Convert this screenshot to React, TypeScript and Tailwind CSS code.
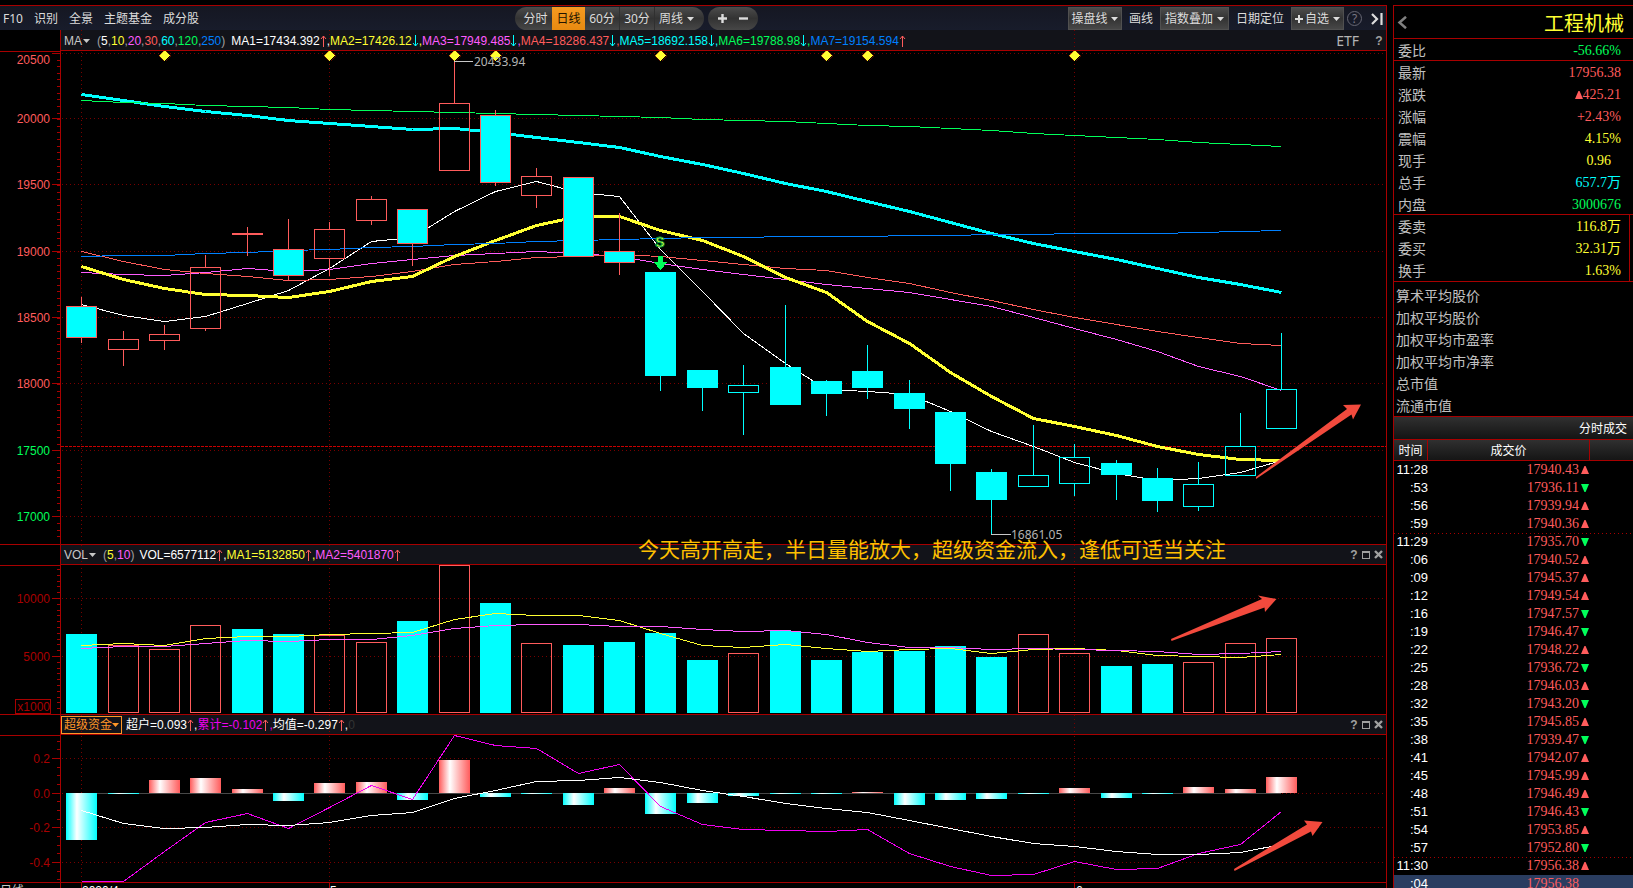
import type { ReactNode } from "react";

type Kind = "up" | "downRed" | "down" | "upCyan";
type Candle = [number, number, number, number, number, Kind];

const RED = "#ff5c5c";
const CYAN = "#00ffff";
const YELLOW = "#ffff32";
const PINK = "#ff5cff";
const GREEN = "#00ff5a";
const BLUE = "#0080ff";
const GRID = "#780000";

// x, high, body top, body bottom, low
const candles: Candle[] = [
  [81, 297, 306, 337, 342, "downRed"],
  [123, 331, 339, 349, 365, "up"],
  [164, 325, 334, 340, 349, "up"],
  [205, 255, 267, 328, 330, "up"],
  [247, 227, 233, 234, 255, "up"],
  [288, 219, 249, 275, 280, "downRed"],
  [329, 222, 229, 258, 275, "up"],
  [371, 196, 199, 220, 224, "up"],
  [412, 209, 209, 243, 265, "downRed"],
  [454, 61, 103, 170, 170, "up"],
  [495, 110, 115, 182, 185, "downRed"],
  [536, 168, 176, 195, 207, "up"],
  [578, 177, 177, 256, 256, "downRed"],
  [619, 213, 251, 262, 274, "downRed"],
  [660, 272, 272, 375, 390, "down"],
  [702, 370, 370, 387, 410, "down"],
  [743, 365, 385, 392, 434, "upCyan"],
  [785, 305, 367, 404, 404, "down"],
  [826, 380, 381, 393, 415, "down"],
  [867, 345, 371, 387, 398, "down"],
  [909, 380, 393, 408, 428, "down"],
  [950, 412, 412, 463, 490, "down"],
  [991, 469, 472, 499, 534, "down"],
  [1033, 425, 475, 486, 486, "upCyan"],
  [1074, 444, 457, 483, 495, "upCyan"],
  [1116, 460, 463, 474, 499, "down"],
  [1157, 468, 478, 500, 511, "down"],
  [1198, 462, 484, 506, 510, "upCyan"],
  [1240, 413, 446, 475, 475, "upCyan"],
  [1281, 333, 389, 428, 428, "upCyan"],
];

const ma5 = [304, 315, 321, 316, 303, 290, 268, 241, 237, 211, 191, 181, 192, 196, 249, 291, 333, 363, 389, 391, 394, 411, 431, 446, 462, 473, 480, 478, 472, 460];
const ma10 = [266, 279, 288, 294, 295, 297, 291, 281, 276, 256, 240, 225, 216, 216, 230, 240, 256, 277, 292, 321, 343, 372, 396, 418, 426, 435, 446, 454, 459, 460];
const ma20 = [272, 274, 275, 272, 268, 271, 269, 263, 259, 255, 253, 251, 253, 256, 263, 269, 274, 279, 284, 288, 292, 299, 306, 317, 328, 339, 351, 366, 376, 390];
const ma30 = [251, 261, 269, 273, 276, 280, 279, 276, 271, 264, 261, 257, 256, 254, 256, 260, 264, 268, 270, 277, 283, 292, 300, 309, 317, 324, 331, 337, 343, 345];
const ma60 = [94, 100, 106, 111, 115, 120, 123, 126, 129, 128, 132, 137, 142, 147, 156, 164, 173, 183, 191, 201, 211, 222, 233, 243, 251, 259, 268, 277, 284, 292];
const ma120 = [100, 102, 103, 105, 106, 107, 109, 110, 111, 112, 113, 114, 115, 116, 117, 119, 120, 121, 123, 125, 126, 128, 130, 133, 135, 137, 139, 142, 144, 146];
const ma250 = [256, 255, 255, 253, 252, 250, 249, 247, 246, 244, 243, 241, 240, 239, 238, 237, 237, 236, 236, 236, 235, 235, 234, 234, 233, 233, 233, 232, 231, 230];

const volTops = [634, 645, 649, 625, 629, 634, 635, 642, 621, 565, 603, 643, 645, 642, 633, 660, 653, 631, 660, 652, 651, 646, 657, 634, 653, 666, 664, 662, 643, 638];
const volHollow = [1, 2, 3, 6, 7, 9, 11, 16, 23, 24, 27, 28, 29];
const volMa5 = [645, 643, 645, 638, 636, 636, 634, 633, 632, 619, 613, 615, 615, 620, 633, 645, 647, 644, 648, 651, 649, 648, 653, 649, 648, 650, 655, 656, 657, 654];
const volMa10 = [648, 646, 646, 643, 640, 641, 639, 639, 635, 628, 625, 624, 624, 626, 626, 629, 631, 630, 634, 642, 647, 647, 649, 648, 649, 650, 651, 654, 653, 651];

const fundBars = [-47, -1, 13, 15, 4, -8, 10, 11, -7, 33, -4, -1, -12, 5, -21, -10, -3, -1, -1, 1, -12, -7, -6, -1, 5, -5, -1, 6, 4, 16];
const fundSum = [881, 881, 851, 822, 813, 828, 807, 785, 799, 735, 745, 748, 773, 764, 806, 824, 829, 830, 831, 829, 853, 866, 875, 874, 861, 869, 868, 853, 844, 811];
const fundAvg = [810, 823, 828, 827, 824, 825, 822, 815, 812, 798, 790, 781, 780, 777, 782, 790, 796, 803, 808, 812, 820, 828, 836, 843, 846, 851, 854, 854, 852, 844];

const months = [81, 329, 1074];
const diamonds = [164, 329, 454, 495, 660, 826, 867, 1074];

const quotes = [
  { label: "最新", value: "17956.38", color: "text-[#ff5c5c]" },
  { label: "涨跌", value: "425.21", color: "text-[#ff5c5c]", up: true },
  { label: "涨幅", value: "+2.43%", color: "text-[#ff5c5c]" },
  { label: "震幅", value: "4.15%", color: "text-[#ffff32]" },
  { label: "现手", value: "0.96", color: "text-[#ffff32] pr-[10px]" },
  { label: "总手", value: "657.7万", color: "text-[#00ffff]" },
  { label: "内盘", value: "3000676", color: "text-[#00ff5a]" },
];

const orders = [
  { label: "委卖", value: "116.8万", color: "text-[#ffff32]" },
  { label: "委买", value: "32.31万", color: "text-[#ffff32]" },
  { label: "换手", value: "1.63%", color: "text-[#ffff32]" },
];

const averages = ["算术平均股价", "加权平均股价", "加权平均市盈率", "加权平均市净率", "总市值", "流通市值"];

const trades: [string, string, number][] = [
  ["11:28", "17940.43", 1],
  [":53", "17936.11", -1],
  [":56", "17939.94", 1],
  [":59", "17940.36", 1],
  ["11:29", "17935.70", -1],
  [":06", "17940.52", 1],
  [":09", "17945.37", 1],
  [":12", "17949.54", 1],
  [":16", "17947.57", -1],
  [":19", "17946.47", -1],
  [":22", "17948.22", 1],
  [":25", "17936.72", -1],
  [":28", "17946.03", 1],
  [":32", "17943.20", -1],
  [":35", "17945.85", 1],
  [":38", "17939.47", -1],
  [":41", "17942.07", 1],
  [":45", "17945.99", 1],
  [":48", "17946.49", 1],
  [":51", "17946.43", -1],
  [":54", "17953.85", 1],
  [":57", "17952.80", -1],
  ["11:30", "17956.38", 1],
  [":04", "17956.38", 0],
];

const Caret = () => (
  <svg width="7" height="4" viewBox="0 0 7 4" className="shrink-0 fill-current">
    <path d="M0 0h7L3.5 4z" />
  </svg>
);

const Arrow = ({ down = false }: { down?: boolean }) => (
  <svg width="7" height="12" viewBox="0 0 7 12" className="shrink-0" fill="none" stroke={down ? CYAN : RED}>
    {down ? <path d="M3.5 0v11M1 8l2.5 3L6 8" /> : <path d="M3.5 12V1M1 4l2.5-3L6 4" />}
  </svg>
);

const Triangle = ({ dir }: { dir: number }) => (
  <svg width="8" height="8" viewBox="0 0 7 7" className="shrink-0" fill={dir > 0 ? RED : GREEN}>
    {dir > 0 && <path d="M0 7L3 0h1l3 7z" />}
    {dir < 0 && <path d="M0 0l3 7h1l3-7z" />}
  </svg>
);

function Line({ ys, color, width = 1 }: { ys: number[]; color: string; width?: number }) {
  const points = ys.map((y, i) => `${candles[i][0] + 0.5},${y + 0.5}`).join(" ");
  return <polyline points={points} fill="none" stroke={color} strokeWidth={width} />;
}

function MonthLines() {
  return (
    <>
      {months.map((x) => (
        <line key={x} x1={x + 0.5} x2={x + 0.5} y1="0" y2="900" stroke={GRID} strokeDasharray="1 3" />
      ))}
    </>
  );
}

// chart body, drawn in screen coordinates shifted by the panel's own origin
function Plot({ top, rows, className, children }: { top: number; rows: number[]; className: string; children: ReactNode }) {
  return (
    <svg className={className} shapeRendering="crispEdges">
      <g transform={`translate(-61 ${-top})`}>
        <MonthLines />
        {rows.map((y) => (
          <line key={y} x1="62" x2="4000" y1={y + 0.5} y2={y + 0.5} stroke={GRID} strokeDasharray="1 3" />
        ))}
        {children}
      </g>
    </svg>
  );
}

interface AxisProps {
  origin: number;
  top: number;
  bottom: number;
  rows: [number, string, string][];
  step: number;
  children?: ReactNode;
}

function Axis({ origin, top, bottom, rows, step, children }: AxisProps) {
  const ticks: number[] = [];
  for (let y = rows[0][0]; y > top + 2; y -= step) ticks.push(Math.round(y));
  for (let y = rows[0][0]; y < bottom - 2; y += step) ticks.push(Math.round(y));
  return (
    <svg className="w-[60px] shrink-0 font-['Liberation_Sans',sans-serif] text-xs" shapeRendering="crispEdges">
      <g transform={`translate(0 ${-origin})`}>
        <path d={`M0 ${top + 0.5}H60`} stroke="#a80000" />
        {ticks.map((y, i) => (
          <path key={i} d={`M57 ${y + 0.5}H60`} stroke="#a80000" />
        ))}
        {rows.map(([y, label, color]) => (
          <g key={label}>
            <path d={`M52 ${y + 0.5}H60`} stroke="#a80000" />
            <text x="50" y={Math.max(y + 5, top + 13)} textAnchor="end" fill={color}>
              {label}
            </text>
          </g>
        ))}
        {children}
      </g>
    </svg>
  );
}

function LegendBar({ className, tools = true, children }: { className: string; tools?: boolean; children: ReactNode }) {
  return (
    <div className={`relative flex items-center border-b border-[#a80000] bg-[#121319] font-['Liberation_Sans','Noto_Sans_CJK_SC',sans-serif] text-xs leading-4 whitespace-nowrap ${className}`}>
      <svg className="absolute inset-0 h-full w-full">
        <g transform="translate(-61 0)">
          <MonthLines />
        </g>
      </svg>
      <div className="relative flex items-center">{children}</div>
      <div className="relative ml-auto flex items-center gap-1 pr-[3px] text-[#a0a0a0]">
        {!tools && <span className="pr-3 font-['Noto_Sans',sans-serif] text-sm leading-4 text-[#b4b4b4]">ETF</span>}
        <button aria-label="帮助" className="w-2 font-bold">
          ?
        </button>
        {tools && (
          <>
            <button aria-label="最大化">
              <svg width="8" height="8" viewBox="0 0 8 8" fill="none" stroke="currentColor" shapeRendering="crispEdges">
                <path d="M.5 0v8M7.5 0v8M0 7.5h8M0 .5h8M0 1.5h8" />
              </svg>
            </button>
            <button aria-label="关闭">
              <svg width="9" height="9" viewBox="0 0 9 9" fill="none" stroke="currentColor" strokeWidth="2.4">
                <path d="M1 1l7 7M8 1L1 8" />
              </svg>
            </button>
          </>
        )}
      </div>
    </div>
  );
}

function Stat({ text, color, down, last }: { text: string; color: string; down?: boolean; last?: boolean }) {
  return (
    <span className={`flex items-center ${color}`}>
      {text}
      <Arrow down={down} />
      {!last && ","}
    </span>
  );
}

function Toolbar() {
  const grey = "bg-linear-to-b from-[#4c4c4c] via-[#333333] to-[#474747]";
  return (
    <div className="flex h-6 items-center bg-linear-to-b from-[#151722] to-[#181c2b] pt-px font-['Noto_Sans','Noto_Sans_CJK_SC',sans-serif] text-xs leading-4 whitespace-nowrap text-[#dcdcdc]">
      <nav className="flex w-[515px] shrink-0 items-center gap-[11px] pt-px pl-[3px]">
        {["F10", "识别", "全景", "主题基金", "成分股"].map((t) => (
          <a key={t} href="#">
            {t}
          </a>
        ))}
      </nav>
      <div className={`flex h-[23px] shrink-0 overflow-hidden rounded-full ${grey}`}>
        <button className="w-[37px] pl-1">分时</button>
        <button className="w-[33px] bg-linear-to-b from-[#f59a20] to-[#e88a10] text-[#221400]">日线</button>
        <button className="w-[35px] border-r border-[#303030]">60分</button>
        <button className="w-[35px] border-r border-[#303030]">30分</button>
        <button className="flex w-[49px] items-center gap-1 pl-1">
          周线 <Caret />
        </button>
      </div>
      <div className={`ml-1 flex h-[23px] w-[50px] shrink-0 items-center justify-center gap-3 rounded-full ${grey}`}>
        <button aria-label="放大">
          <svg width="9" height="9" stroke="currentColor" strokeWidth="2.4">
            <path d="M0 4.5h9M4.5 0v9" />
          </svg>
        </button>
        <button aria-label="缩小">
          <svg width="9" height="9" stroke="currentColor" strokeWidth="2.4">
            <path d="M0 4.5h9" />
          </svg>
        </button>
      </div>
      <div className="ml-auto flex shrink-0 items-center gap-[7px] pr-[3px]">
        <button className={`flex h-[23px] w-[54px] items-center justify-center gap-1 border border-[#505050] ${grey}`}>
          操盘线 <Caret />
        </button>
        <button>画线</button>
        <button className={`flex h-[23px] w-[69px] items-center justify-center gap-1 border border-[#505050] ${grey}`}>
          指数叠加 <Caret />
        </button>
        <button>日期定位</button>
        <button className={`flex h-[23px] w-[53px] items-center justify-center gap-1 border border-[#505050] ${grey}`}>
          <svg width="8" height="8" className="-mr-0.5" stroke="currentColor" strokeWidth="2">
            <path d="M0 4h8M4 0v8" />
          </svg>
          自选 <Caret />
        </button>
        <button aria-label="帮助" className="-ml-1 flex size-[15px] items-center justify-center rounded-full border border-[#666672] text-[#777783]">
          ?
        </button>
        <button aria-label="收起" className="pl-0.5">
          <svg width="12" height="12" fill="none" stroke="currentColor" strokeWidth="2.2">
            <path d="M1 1l5 5-5 5M10.500 0v12" />
          </svg>
        </button>
      </div>
    </div>
  );
}

function PriceChart() {
  const rows: [number, string, string][] = [
    [53, "20500", RED],
    [118, "20000", RED],
    [184, "19500", RED],
    [251, "19000", RED],
    [317, "18500", RED],
    [383, "18000", RED],
    [450, "17500", GREEN],
    [516, "17000", GREEN],
  ];
  return (
    <section className="flex border-b border-[#a80000]">
      <Axis origin={30} top={51} bottom={544} step={6.62} rows={rows} />
      <div className="min-w-0 flex-1 border-l border-[#a80000]">
        <LegendBar className="h-[21px] pt-0.5 pl-[3px]" tools={false}>
          <button className="flex items-center gap-px text-[#c8c8c8]">
            MA <Caret />
          </button>
          <span className="pr-[6px] pl-[7px] text-[#a0a0a0]">
            (<b className="font-normal text-white">5</b>,<b className="font-normal text-[#ffff32]">10</b>,
            <b className="font-normal text-[#ff5cff]">20</b>,<b className="font-normal text-[#ff5c5c]">30</b>,
            <b className="font-normal text-[#00ffff]">60</b>,<b className="font-normal text-[#00ff5a]">120</b>,
            <b className="font-normal text-[#0080ff]">250</b>)
          </span>
          <Stat text="MA1=17434.392" color="text-white" />
          <Stat text="MA2=17426.12" color="text-[#ffff32]" down />
          <Stat text="MA3=17949.485" color="text-[#ff5cff]" down />
          <Stat text="MA4=18286.437" color="text-[#ff5c5c]" down />
          <Stat text="MA5=18692.158" color="text-[#00ffff]" down />
          <Stat text="MA6=19788.98" color="text-[#00ff5a]" down />
          <Stat text="MA7=19154.594" color="text-[#0080ff]" last />
        </LegendBar>
        <Plot top={51} rows={rows.map((r) => r[0])} className="block h-[493px] w-full">
          <line x1="61" x2="4000" y1="446.500" y2="446.500" stroke="#c80000" strokeDasharray="3 1" />
          <Line ys={ma5} color="#ffffff" />
          <Line ys={ma20} color={PINK} />
          <Line ys={ma30} color={RED} />
          <Line ys={ma10} color={YELLOW} width={3} />
          <Line ys={ma60} color={CYAN} width={3} />
          <Line ys={ma120} color={GREEN} />
          <Line ys={ma250} color={BLUE} />
          {candles.map(([x, high, top, bottom, low, kind]) => {
            const edge = kind === "up" || kind === "downRed" ? RED : CYAN;
            const filled = kind === "down" || kind === "downRed";
            return (
              <g key={x} stroke={edge}>
                <path d={`M${x + 0.5} ${high}V${top}M${x + 0.5} ${bottom + 1}V${low + 1}`} />
                <rect x={x - 14.5} y={top + 0.5} width="30" height={bottom - top} fill={filled ? CYAN : "none"} />
              </g>
            );
          })}
          {diamonds.map((x) => (
            <path key={x} d={`M${x - 5} 55.500l5.500-5.500 5.500 5.500-5.500 5.500z`} fill={YELLOW} stroke="#a02000" strokeWidth="0.5" />
          ))}
          <g className="font-['Noto_Sans',sans-serif] text-xs" fill="#b4b4b4">
            <path d="M454 61.500h19M991 534.500h20" stroke="#c8c8c8" />
            <text x="474" y="66">20433.94</text>
            <text x="1011" y="539">16861.05</text>
          </g>
          <text x="660" y="247" textAnchor="middle" className="font-['Liberation_Sans',sans-serif] text-sm font-bold" fill={YELLOW} stroke="#00a040" strokeWidth="1">
            S
          </text>
          <path d="M658 256h5v6h4l-6 8h-1l-6-8h4z" fill={GREEN} />
          <path d="M1256 477L1347 409l-4-4 18-.5-8 15-1.500-5L1256 479z" fill="#f24a3d" shapeRendering="auto" />
        </Plot>
      </div>
    </section>
  );
}

function VolumeChart() {
  return (
    <section className="flex border-b border-[#a80000]">
      <Axis
        origin={545}
        top={565}
        bottom={714}
        step={5.8}
        rows={[
          [598, "10000", "#a80000"],
          [656, "5000", "#a80000"],
        ]}
      >
        <rect x="15.500" y="699.500" width="35" height="14" fill="none" stroke="#a80000" />
        <text x="50" y="711" textAnchor="end" fill="#a80000">
          x1000
        </text>
      </Axis>
      <div className="relative min-w-0 flex-1 border-l border-[#a80000]">
        <LegendBar className="h-5 pl-[3px]">
          <button className="flex items-center gap-px text-[#c8c8c8]">
            VOL <Caret />
          </button>
          <span className="pr-[5px] pl-[7px] text-[#a0a0a0]">
            (<b className="font-normal text-[#ffff32]">5</b>,<b className="font-normal text-[#ff5cff]">10</b>)
          </span>
          <Stat text="VOL=6577112" color="text-white" />
          <Stat text="MA1=5132850" color="text-[#ffff32]" />
          <Stat text="MA2=5401870" color="text-[#ff5cff]" last />
        </LegendBar>
        <Plot top={565} rows={[598, 656]} className="block h-[149px] w-full">
          {volTops.map((y, i) => {
            const x = candles[i][0];
            return volHollow.includes(i) ? (
              <rect key={i} x={x - 14.5} y={y + 0.5} width="30" height={712 - y} fill="none" stroke={RED} />
            ) : (
              <rect key={i} x={x - 15} y={y} width="31" height={713 - y} fill={CYAN} />
            );
          })}
          <Line ys={volMa5} color={YELLOW} />
          <Line ys={volMa10} color={PINK} />
          <path d="M1171 639L1262 599l-4-3.500 18.500 3.500-11.500 13-.5-4.500L1171.500 641z" fill="#f24a3d" shapeRendering="auto" />
        </Plot>
        <p className="absolute -top-2 left-[577px] font-['Noto_Sans_CJK_SC',sans-serif] text-[21px] leading-[22px] whitespace-nowrap text-[#ffc000]">
          今天高开高走，半日量能放大，超级资金流入，逢低可适当关注
        </p>
      </div>
    </section>
  );
}

function FundChart() {
  return (
    <section className="flex border-b border-[#a80000]">
      <Axis
        origin={715}
        top={735}
        bottom={882}
        step={8.67}
        rows={[
          [758, "0.2", "#a80000"],
          [793, "0.0", "#a80000"],
          [827, "-0.2", "#a80000"],
          [862, "-0.4", "#a80000"],
        ]}
      />
      <div className="min-w-0 flex-1 border-l border-[#a80000]">
        <LegendBar className="h-5">
          <button className="mr-1 flex h-[18px] w-[61px] items-center border border-[#ff9628] pl-0.5 text-[#ff9628]">
            超级资金
            <Caret />
          </button>
          <Stat text="超户=0.093" color="text-white" />
          <Stat text="累计=-0.102" color="text-[#f000f0]" />
          <Stat text="均值=-0.297" color="text-white" />
          <span className="text-[#333333]">0</span>
        </LegendBar>
        <Plot top={735} rows={[758, 793, 827, 862]} className="block h-[147px] w-full">
          <defs>
            <linearGradient id="inflow">
              <stop offset="0" stopColor={RED} />
              <stop offset="0.35" stopColor="#ffffff" />
              <stop offset="1" stopColor={RED} />
            </linearGradient>
            <linearGradient id="outflow">
              <stop offset="0" stopColor={CYAN} />
              <stop offset="0.35" stopColor="#ffffff" />
              <stop offset="1" stopColor={CYAN} />
            </linearGradient>
          </defs>
          <line x1="81" x2="1281" y1="793.500" y2="793.500" stroke="#484848" />
          {fundBars.map((v, i) => (
            <rect key={i} x={candles[i][0] - 15} y={v > 0 ? 793 - v : 793} width="31" height={Math.abs(v)} fill={v > 0 ? "url(#inflow)" : "url(#outflow)"} />
          ))}
          <Line ys={fundSum} color="#f000f0" />
          <Line ys={fundAvg} color="#ffffff" />
          <path d="M1234 869L1307 824.500l-3-4 18.500 1.500-10 14-1.500-4.500L1234.500 871z" fill="#f24a3d" shapeRendering="auto" />
        </Plot>
      </div>
    </section>
  );
}

function QuoteRow({ label, value, color, up }: { label: string; value: string; color: string; up?: boolean }) {
  return (
    <div className="flex h-[22px] items-center justify-between pr-3 pl-1">
      <dt className="text-[#c0c0c0]">{label}</dt>
      <dd className={`flex items-center pt-0.5 font-['Liberation_Serif','Noto_Sans_CJK_SC',serif] ${color}`}>
        {up && <Triangle dir={1} />}
        {value}
      </dd>
    </div>
  );
}

function QuotePanel() {
  return (
    <aside className="w-[240px] shrink-0 border-t border-l border-[#a80000] font-['Noto_Sans_CJK_SC',sans-serif] text-sm leading-5 whitespace-nowrap">
      <header className="flex h-[33px] items-center justify-between border-b border-[#a80000] pr-[9px] pl-[3px]">
        <button aria-label="返回" className="text-[#808080]">
          <svg width="10" height="13" viewBox="0 0 10 13" fill="none" stroke="currentColor" strokeWidth="2.5">
            <path d="M9 .8L2.500 6.500 9 12.200" />
          </svg>
        </button>
        <h1 className="pt-px text-xl leading-6 text-[#ffff32]">工程机械</h1>
      </header>
      <dl className="border-b border-[#a80000]">
        <div className="h-[21px]">
          <QuoteRow label="委比" value="-56.66%" color="text-[#00ff5a]" />
        </div>
      </dl>
      <dl className="h-[154px] border-b border-[#a80000]">
        {quotes.map((q) => (
          <QuoteRow key={q.label} {...q} />
        ))}
      </dl>
      <dl className="mr-[3px] border-r border-[#a80000]">
        {orders.map((q) => (
          <div key={q.label} className="-mr-1">
            <QuoteRow {...q} />
          </div>
        ))}
      </dl>
      <ul className="border-y border-[#a80000] pt-0.5 pl-0.5 text-[#c0c0c0]">
        {averages.map((a) => (
          <li key={a} className="h-[22px] leading-[22px]">
            {a}
          </li>
        ))}
      </ul>
      <h2 className="h-[23px] border-b border-[#a80000] bg-linear-to-b from-[#303030] to-[#141414] pr-[6px] text-right text-xs leading-[22px] text-white">
        分时成交
      </h2>
      <table className="w-full table-fixed border-separate border-spacing-0">
        <thead className="bg-linear-to-b from-[#303030] to-[#141414] text-xs leading-5 text-white">
          <tr>
            <th className="h-[21px] w-[34px] border-r border-b border-[#a80000] p-0 font-normal">时间</th>
            <th className="border-r border-b border-[#a80000] p-0 font-normal">成交价</th>
            <th className="w-[43px] border-b border-[#a80000] p-0" />
          </tr>
        </thead>
        <tbody>
          {trades.map(([time, price, dir]) => (
            <tr
              key={time}
              className={
                dir === 0
                  ? "bg-[#2a3d60]"
                  : time === "11:29" || time === "11:30"
                    ? "bg-[repeating-linear-gradient(90deg,#a80000_0_1px,transparent_1px_4px)] bg-[length:100%_1px] bg-no-repeat"
                    : ""
              }
            >
              <td className="h-[18px] p-0 text-right font-['Liberation_Sans',sans-serif] text-[13px] leading-[18px] text-white">{time}</td>
              <td className="p-0 font-['Liberation_Serif',serif] leading-[18px] text-[#ff5c5c]">
                <span className="flex items-center justify-end gap-0.5 pr-px">
                  {price}
                  <Triangle dir={dir} />
                </span>
              </td>
              <td className="p-0" />
            </tr>
          ))}
        </tbody>
      </table>
    </aside>
  );
}

export default function App() {
  return (
    <main className="flex h-screen gap-[6px] overflow-hidden bg-black pt-[5px]">
      <div className="min-w-0 flex-1 overflow-hidden border-t border-r border-[#a80000]">
        <Toolbar />
        <PriceChart />
        <VolumeChart />
        <FundChart />
        <footer className="flex h-4 font-['Liberation_Sans','Noto_Sans_CJK_SC',sans-serif] text-xs leading-4 whitespace-nowrap text-white">
          <span className="flex w-[60px] items-center gap-0.5 text-[#c8c8c8]">
            日线 <Caret />
          </span>
          <span className="w-[21px] border-l border-[#a80000]" />
          <span className="w-[248px] border-l border-[#a80000]">2020/4</span>
          <span className="w-[745px] border-l border-[#a80000]">5</span>
          <span className="border-l border-[#a80000] pl-px">6</span>
        </footer>
      </div>
      <QuotePanel />
    </main>
  );
}
